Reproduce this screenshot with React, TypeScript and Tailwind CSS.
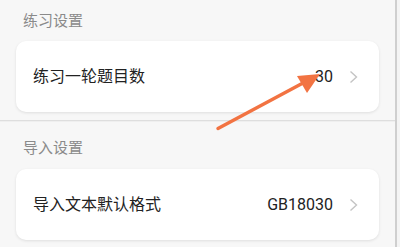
import React from 'react'

const font = { fontFamily: 'Roboto, "Noto Sans CJK SC", sans-serif' }

function Chevron() {
  return (
    <svg width="10" height="14" viewBox="0 0 10 14" className="shrink-0">
      <path d="M1.5 1.5 L7.5 7 L1.5 12.5" fill="none" stroke="#c4c4c4" strokeWidth="1.4" />
    </svg>
  )
}

function Row({ label, value }: { label: string; value: string }) {
  return (
    <div className="mx-4 h-[71px] rounded-[10px] bg-white shadow-[0_1px_3px_rgba(0,0,0,0.1)] flex items-center pl-[17px] pr-[20px]">
      <span className="flex-1 text-[16px] text-[#222]">{label}</span>
      <span className="text-[16px] text-[#222]">{value}</span>
      <span className="ml-[16px] flex items-center">
        <Chevron />
      </span>
    </div>
  )
}

export default function App() {
  return (
    <div className="relative w-[400px] h-[247px] overflow-hidden bg-[#f7f7f7] flex" style={font}>
      <div className="w-[395px]">
        <div className="pt-[11px] pl-[23px] h-[31px] text-[15px] leading-[20px] text-[#8a8a8a]">练习设置</div>
        <div className="mt-[10px]">
          <Row label="练习一轮题目数" value="30" />
        </div>
        <div className="mt-[8px] h-px bg-[#dedede]" />
        <div className="h-px bg-[#efefef]" />
        <div className="pt-[16px] pl-[23px] h-[36px] text-[15px] leading-[20px] text-[#8a8a8a]">导入设置</div>
        <div className="mt-[11px]">
          <Row label="导入文本默认格式" value="GB18030" />
        </div>
      </div>
      <div className="w-[2px] bg-[#cfcfcf]" />
      <div className="flex-1 bg-[#f4f4f4]" />

      <svg className="absolute left-0 top-0 pointer-events-none" width="400" height="247">
        <line x1="218" y1="128.5" x2="303" y2="83" stroke="#f27342" strokeWidth="3.5" strokeLinecap="round" />
        <polygon points="320,74 297,76 307,93" fill="#f27342" />
      </svg>
    </div>
  )
}
